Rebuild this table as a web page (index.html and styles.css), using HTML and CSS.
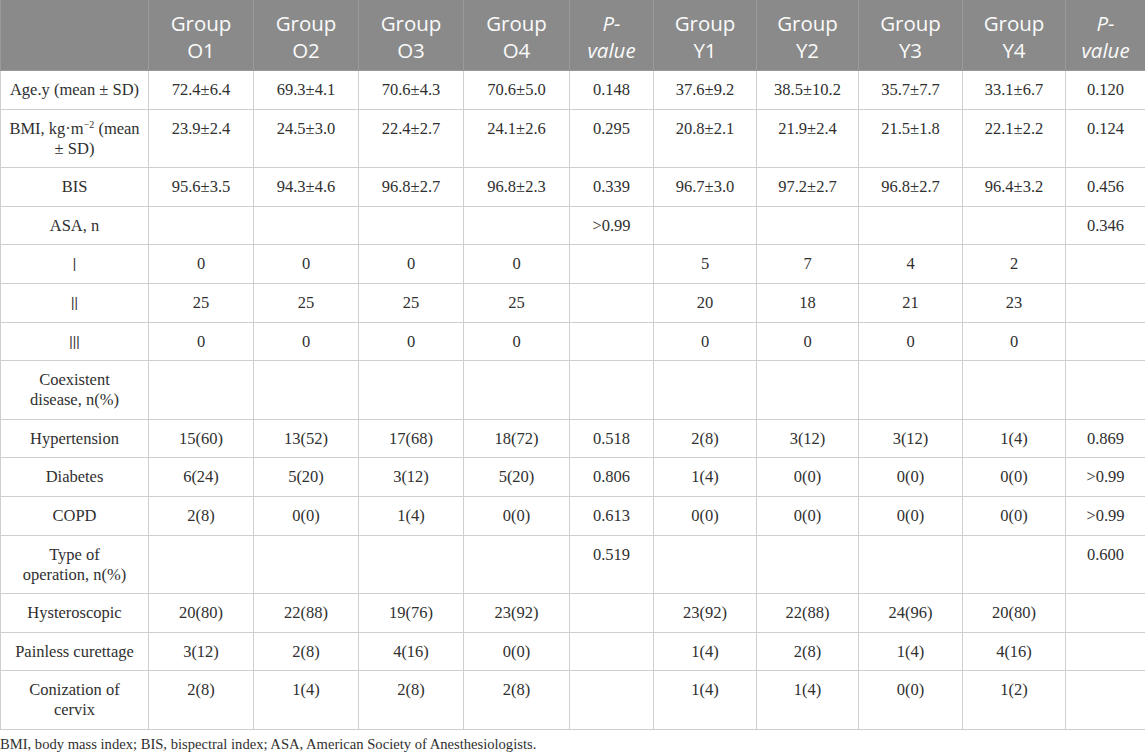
FILE: index.html
```html
<!DOCTYPE html>
<html>
<head>
<meta charset="utf-8">
<link rel="stylesheet" href="styles.css">
</head>
<body>
<table class="data">
<colgroup>
<col class="c-label"><col class="c-g"><col class="c-g"><col class="c-g"><col class="c-g4"><col class="c-p1">
<col class="c-y1"><col class="c-y2"><col class="c-y3"><col class="c-y4"><col class="c-p2">
</colgroup>
<thead>
<tr>
<th></th>
<th>Group<br>O1</th><th>Group<br>O2</th><th>Group<br>O3</th><th>Group<br>O4</th><th><i>P-<br>value</i></th>
<th>Group<br>Y1</th><th>Group<br>Y2</th><th>Group<br>Y3</th><th>Group<br>Y4</th><th><i>P-<br>value</i></th>
</tr>
</thead>
<tbody>
<tr><td>Age.y (mean ± SD)</td><td>72.4±6.4</td><td>69.3±4.1</td><td>70.6±4.3</td><td>70.6±5.0</td><td>0.148</td><td>37.6±9.2</td><td>38.5±10.2</td><td>35.7±7.7</td><td>33.1±6.7</td><td>0.120</td></tr>
<tr><td>BMI, kg·m<sup>−2</sup> (mean<br>± SD)</td><td>23.9±2.4</td><td>24.5±3.0</td><td>22.4±2.7</td><td>24.1±2.6</td><td>0.295</td><td>20.8±2.1</td><td>21.9±2.4</td><td>21.5±1.8</td><td>22.1±2.2</td><td>0.124</td></tr>
<tr><td>BIS</td><td>95.6±3.5</td><td>94.3±4.6</td><td>96.8±2.7</td><td>96.8±2.3</td><td>0.339</td><td>96.7±3.0</td><td>97.2±2.7</td><td>96.8±2.7</td><td>96.4±3.2</td><td>0.456</td></tr>
<tr><td>ASA, n</td><td></td><td></td><td></td><td></td><td>&gt;0.99</td><td></td><td></td><td></td><td></td><td>0.346</td></tr>
<tr><td class="roman"><span>Ⅰ</span></td><td>0</td><td>0</td><td>0</td><td>0</td><td></td><td>5</td><td>7</td><td>4</td><td>2</td><td></td></tr>
<tr><td class="roman"><span>Ⅱ</span></td><td>25</td><td>25</td><td>25</td><td>25</td><td></td><td>20</td><td>18</td><td>21</td><td>23</td><td></td></tr>
<tr><td class="roman"><span>Ⅲ</span></td><td>0</td><td>0</td><td>0</td><td>0</td><td></td><td>0</td><td>0</td><td>0</td><td>0</td><td></td></tr>
<tr><td>Coexistent<br>disease, n(%)</td><td></td><td></td><td></td><td></td><td></td><td></td><td></td><td></td><td></td><td></td></tr>
<tr><td>Hypertension</td><td>15(60)</td><td>13(52)</td><td>17(68)</td><td>18(72)</td><td>0.518</td><td>2(8)</td><td>3(12)</td><td>3(12)</td><td>1(4)</td><td>0.869</td></tr>
<tr><td>Diabetes</td><td>6(24)</td><td>5(20)</td><td>3(12)</td><td>5(20)</td><td>0.806</td><td>1(4)</td><td>0(0)</td><td>0(0)</td><td>0(0)</td><td>&gt;0.99</td></tr>
<tr><td>COPD</td><td>2(8)</td><td>0(0)</td><td>1(4)</td><td>0(0)</td><td>0.613</td><td>0(0)</td><td>0(0)</td><td>0(0)</td><td>0(0)</td><td>&gt;0.99</td></tr>
<tr><td>Type of<br>operation, n(%)</td><td></td><td></td><td></td><td></td><td>0.519</td><td></td><td></td><td></td><td></td><td>0.600</td></tr>
<tr><td>Hysteroscopic</td><td>20(80)</td><td>22(88)</td><td>19(76)</td><td>23(92)</td><td></td><td>23(92)</td><td>22(88)</td><td>24(96)</td><td>20(80)</td><td></td></tr>
<tr><td>Painless curettage</td><td>3(12)</td><td>2(8)</td><td>4(16)</td><td>0(0)</td><td></td><td>1(4)</td><td>2(8)</td><td>1(4)</td><td>4(16)</td><td></td></tr>
<tr><td>Conization of<br>cervix</td><td>2(8)</td><td>1(4)</td><td>2(8)</td><td>2(8)</td><td></td><td>1(4)</td><td>1(4)</td><td>0(0)</td><td>1(2)</td><td></td></tr>
</tbody>
</table>
<p class="note">BMI, body mass index; BIS, bispectral index; ASA, American Society of Anesthesiologists.</p>
</body>
</html>
```

FILE: styles.css
```css
html, body {
  margin: 0;
  padding: 0;
  background: #ffffff;
}

.data {
  width: 1145px;
  border-collapse: collapse;
  table-layout: fixed;
  font-family: "Liberation Serif", "Times New Roman", serif;
  font-size: 16.5px;
  color: #303030;
}

.c-label { width: 148px; }
.c-g { width: 105px; }
.c-g4 { width: 106px; }
.c-p1 { width: 84px; }
.c-y1 { width: 103px; }
.c-y2 { width: 102px; }
.c-y3 { width: 104px; }
.c-y4 { width: 103px; }
.c-p2 { width: 80px; }

.data th {
  background: #8a8a8a;
  color: #fafafa;
  font-family: "Open Sans", "Noto Sans", sans-serif;
  font-weight: 400;
  font-size: 20.5px;
  line-height: 27px;
  padding: 10px 2px 6px;
  text-align: center;
  vertical-align: top;
  border: 1px solid #9a9a9a;
  border-top: none;
}

.data td {
  border: 1px solid #cfcfcf;
  text-align: center;
  vertical-align: top;
  line-height: 20px;
  padding: 9px 6px 8.6px;
  white-space: nowrap;
}

.data td.roman {
  font-family: "Noto Sans CJK SC", "DejaVu Sans", sans-serif;
  font-size: 17px;
  font-weight: 400;
  color: #3a3a3a;
}

.data td.roman span {
  display: inline-block;
  transform: scaleX(0.7);
}

.data sup {
  font-size: 10px;
  line-height: 0;
  vertical-align: 6px;
}

.note {
  margin: 6px 0 0;
  font-family: "Liberation Serif", "Times New Roman", serif;
  font-size: 14.6px;
  color: #303030;
}
```
